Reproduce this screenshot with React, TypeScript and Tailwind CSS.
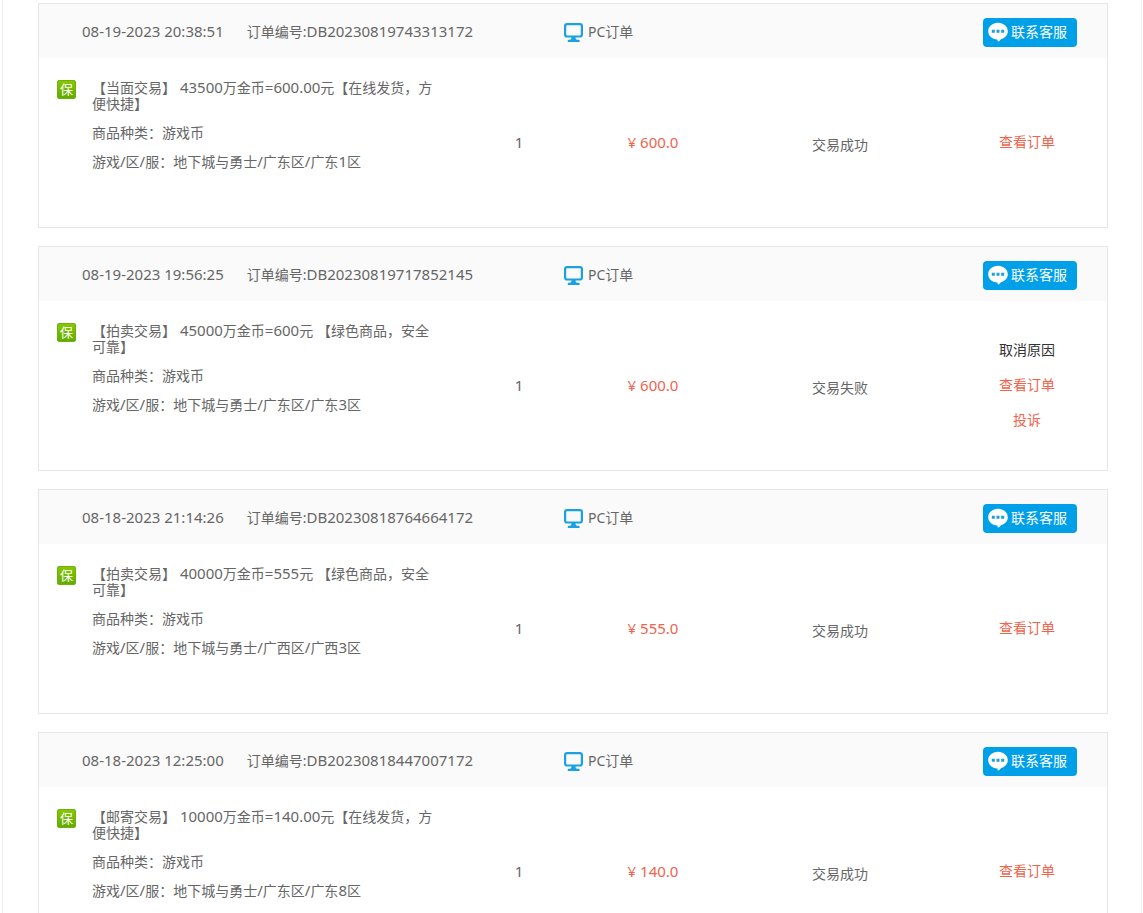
type Order = {
    time: string
    code: string
    title: string[]
    kind: string
    server: string
    count: number
    price: string
    status: string
    failed?: boolean
}

const orders: Order[] = [
    {
        time: "08-19-2023 20:38:51",
        code: "DB20230819743313172",
        title: ["【当面交易】 43500万金币=600.00元【在线发货，方", "便快捷】"],
        kind: "游戏币",
        server: "地下城与勇士/广东区/广东1区",
        count: 1,
        price: "600.0",
        status: "交易成功",
    },
    {
        time: "08-19-2023 19:56:25",
        code: "DB20230819717852145",
        title: ["【拍卖交易】 45000万金币=600元 【绿色商品，安全", "可靠】"],
        kind: "游戏币",
        server: "地下城与勇士/广东区/广东3区",
        count: 1,
        price: "600.0",
        status: "交易失败",
        failed: true,
    },
    {
        time: "08-18-2023 21:14:26",
        code: "DB20230818764664172",
        title: ["【拍卖交易】 40000万金币=555元 【绿色商品，安全", "可靠】"],
        kind: "游戏币",
        server: "地下城与勇士/广西区/广西3区",
        count: 1,
        price: "555.0",
        status: "交易成功",
    },
    {
        time: "08-18-2023 12:25:00",
        code: "DB20230818447007172",
        title: ["【邮寄交易】 10000万金币=140.00元【在线发货，方", "便快捷】"],
        kind: "游戏币",
        server: "地下城与勇士/广东区/广东8区",
        count: 1,
        price: "140.0",
        status: "交易成功",
    },
]

// latin and digits run one size larger than the chinese text
function Mixed({ text }: { text: string }) {
    return (
        <>
            {text.split(/([\w=./ ]+)/).map((part, i) =>
                i % 2 ? <span key={i} className="text-[15px] leading-none">{part}</span> : part
            )}
        </>
    )
}

function MonitorIcon() {
    return (
        <svg width="19" height="19" viewBox="0 0 19 19" aria-hidden="true">
            <rect x="1.1" y="1.1" width="16.8" height="12.4" rx="2" fill="none" stroke="#1ba1e2" strokeWidth="2.2" />
            <path d="M7.4 14h4.2v1.6l1 1.2h2.2q.8 0 .8.8V19H3.8v-1.4q0-.8.8-.8h1.8l1-1.2z" fill="#1ba1e2" />
        </svg>
    )
}

function ChatIcon() {
    return (
        <svg width="20" height="20" viewBox="0 0 20 20" aria-hidden="true">
            <path d="M10 0.8C4.5 0.8 0.2 4.5 0.2 9.2c0 4.5 3.9 8 9 8.4 0.5 0.6 0.6 1.2 0.7 2.2 1.3-0.6 2.3-1.6 3-2.6 4.1-1.1 6.9-4.2 6.9-8C19.8 4.5 15.5 0.8 10 0.8z" fill="#fff" />
            <path d="M3.8 7.7h3v3h-3zM8.5 7.7h3v3h-3zM13.2 7.7h3v3h-3z" fill="#1b9fdf" />
        </svg>
    )
}

function OrderCard({ order }: { order: Order }) {
    return (
        <article className="border border-[#e6e6e6]">
            <header className="flex h-[54px] items-center bg-[#fafafa] pr-[30px]">
                <div className="flex flex-1 items-center gap-[23px] pl-[43px]">
                    <time className="text-[15px]">{order.time}</time>
                    <span>订单编号:<span className="text-[15px]">{order.code}</span></span>
                </div>
                <div className="flex w-[419px] items-center gap-[5px] pt-[2px]">
                    <MonitorIcon />
                    <span>PC订单</span>
                </div>
                <button className="mt-[2px] flex h-[29px] w-[94px] items-center gap-[3px] rounded-[4px] bg-[#00a0e9] pl-[5px] text-white">
                    <ChatIcon />
                    <span>联系客服</span>
                </button>
            </header>

            <div className="flex min-h-[169px] pr-[13px]">
                <div className="flex flex-1 items-start gap-4 pt-[22px] pl-[18px]">
                    <span className="flex size-[19px] items-center justify-center rounded-[2px] border border-[#6db010] bg-linear-to-b from-[#86c800] to-[#62ab00] pb-[2px] text-[13px] text-white">保</span>
                    <div className="space-y-[13px]">
                        <h3>
                            {order.title.map((line) => (
                                <span key={line} className="block"><Mixed text={line} /></span>
                            ))}
                        </h3>
                        <p>商品种类：{order.kind}</p>
                        <p><Mixed text={"游戏/区/服：" + order.server} /></p>
                    </div>
                </div>
                <div className="flex w-[134px] items-center justify-center pb-[2px] text-[15px]">{order.count}</div>
                <div className="flex w-[134px] items-center justify-center pb-[2px] text-[15px] text-[#f0634d]">¥ {order.price}</div>
                <div className="flex w-[240px] items-center justify-center pt-1">{order.status}</div>
                <div className="flex w-[134px] flex-col items-center justify-center pb-[2px] leading-[35px] text-[#f0634d]">
                    {order.failed && <a href="#" className="text-[#333]">取消原因</a>}
                    <a href="#">查看订单</a>
                    {order.failed && <a href="#">投诉</a>}
                </div>
            </div>
        </article>
    )
}

export default function App() {
    return (
        <div className="h-screen overflow-hidden bg-white pr-px pl-[2px] font-['Noto_Sans','Noto_Sans_CJK_SC',sans-serif] text-[14px] leading-4 text-[#666]">
            <main className="space-y-[18px] border-x border-[#eee] pt-[3px] pr-[33px] pl-[35px]">
                {orders.map((order) => (
                    <OrderCard key={order.code} order={order} />
                ))}
            </main>
        </div>
    )
}
